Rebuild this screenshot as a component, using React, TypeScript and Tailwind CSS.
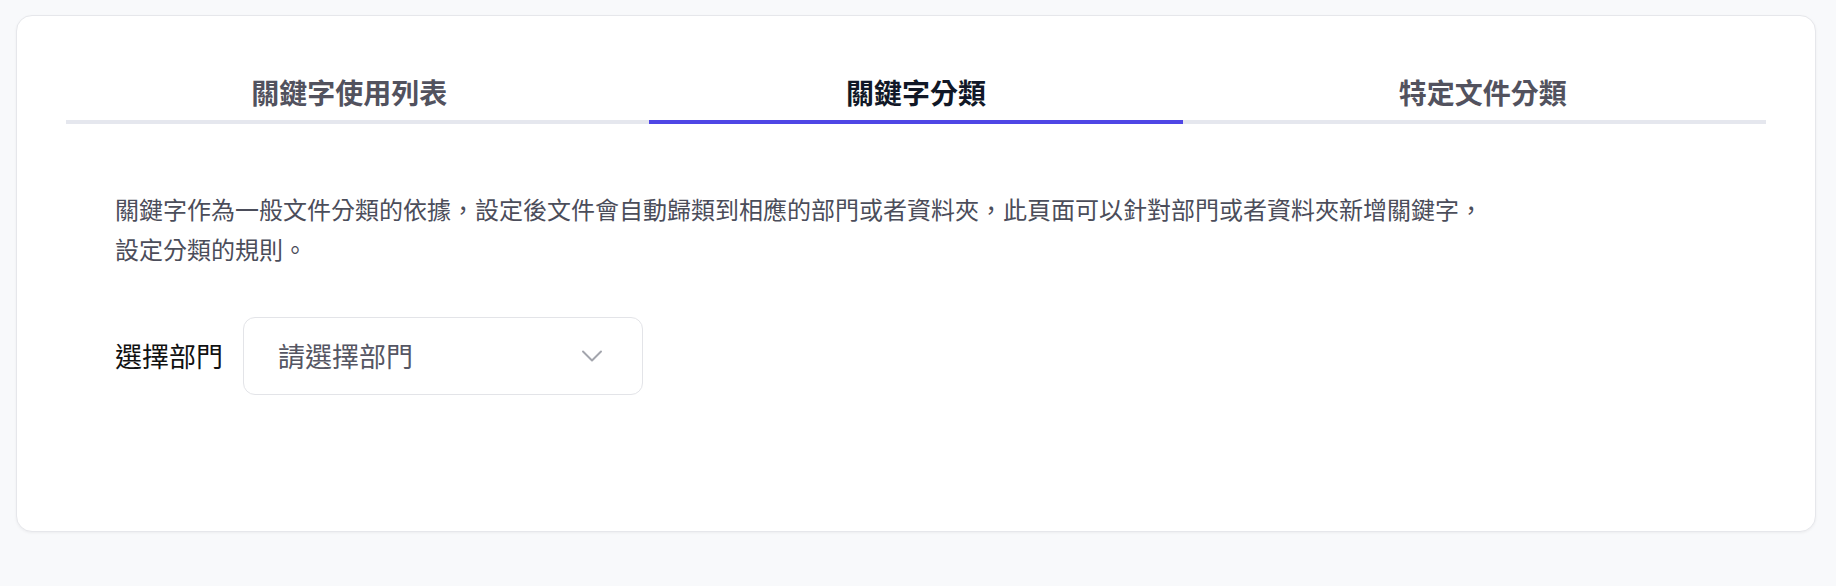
import { ChevronDown } from 'lucide-react';

const TABS = ['關鍵字使用列表', '關鍵字分類', '特定文件分類'];

export default function App() {
  const active = 1;

  return (
    <div className="min-h-screen bg-[#f8f9fb] px-4 pt-[15px] font-['Noto_Sans_CJK_TC','Noto_Sans',sans-serif]">
      <div className="w-[1800px] rounded-2xl border border-[#e6e7eb] bg-white px-[49px] pt-[56px] pb-[136px] shadow-[0_1px_3px_rgba(0,0,0,0.05)]">
        <div className="flex border-b-4 border-[#e5e7ee]">
          {TABS.map((t, i) => (
            <button
              key={t}
              className={
                i === active
                  ? 'mx-4 -mb-1 flex-1 border-b-4 border-[#4f46e5] pb-2 text-[28px] leading-[40px] font-bold text-[#111827]'
                  : 'mx-4 -mb-1 flex-1 border-b-4 border-transparent pb-2 text-[28px] leading-[40px] font-semibold text-[#52525e]'
              }
            >
              {t}
            </button>
          ))}
        </div>

        <div className="px-[49px]">
          <p className="mt-[65px] w-[1380px] text-[24px] leading-[40px] text-[#4b4d5a]">
            關鍵字作為一般文件分類的依據，設定後文件會自動歸類到相應的部門或者資料夾，此頁面可以針對部門或者資料夾新增關鍵字，設定分類的規則。
          </p>

          <div className="mt-12 flex items-center gap-5">
            <span className="text-[27px] leading-[40px] text-[#111111]">選擇部門</span>
            <div className="flex h-[78px] w-[400px] items-center justify-between rounded-xl border border-[#e3e4e8] bg-white pl-[34px] pr-[32px]">
              <span className="text-[27px] leading-[40px] text-[#555663]">請選擇部門</span>
              <ChevronDown className="h-[36px] w-[36px] text-[#a3a5ad]" strokeWidth={1.3} />
            </div>
          </div>
        </div>
      </div>
    </div>
  );
}
